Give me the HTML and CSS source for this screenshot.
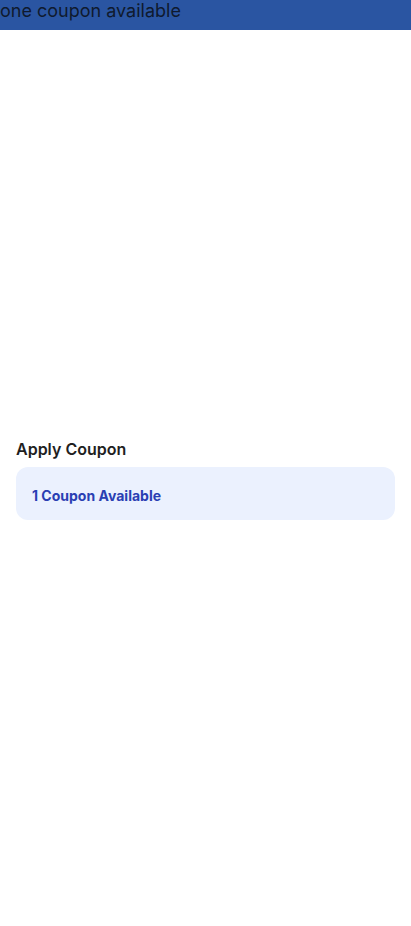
FILE: index.html
```html
<!DOCTYPE html>
<html>
<head>
<meta charset="utf-8">
<link rel="stylesheet" href="styles.css">
</head>
<body>
<div class="topbar">one coupon available</div>
<main class="content">
  <section class="coupon-section">
    <h2 class="title">Apply Coupon</h2>
    <div class="coupon-card">
      <span class="coupon-text">1 Coupon Available</span>
    </div>
  </section>
</main>
</body>
</html>
```
FILE: styles.css
```css
* { box-sizing: border-box; }
html, body { margin: 0; padding: 0; background: #fff; }
body { font-family: Inter, "Noto Sans", sans-serif; }
.topbar {
  height: 30px;
  background: #2a55a2;
  color: #0f1a2e;
  font-size: 18px;
  line-height: 22px;
  padding: 0;
}
.content {
  padding: 408px 16px 0;
}
.coupon-section {
  display: flex;
  flex-direction: column;
  gap: 7px;
}
.title {
  margin: 0;
  font-size: 16px;
  font-weight: 600;
  line-height: 22px;
  color: #1f1f1f;
}
.coupon-card {
  height: 53px;
  background: #ebf1fe;
  border-radius: 12px;
  display: flex;
  align-items: center;
  padding: 4px 16px 0;
}
.coupon-text {
  font-size: 14px;
  font-weight: 700;
  color: #2a3fb3;
}
```
